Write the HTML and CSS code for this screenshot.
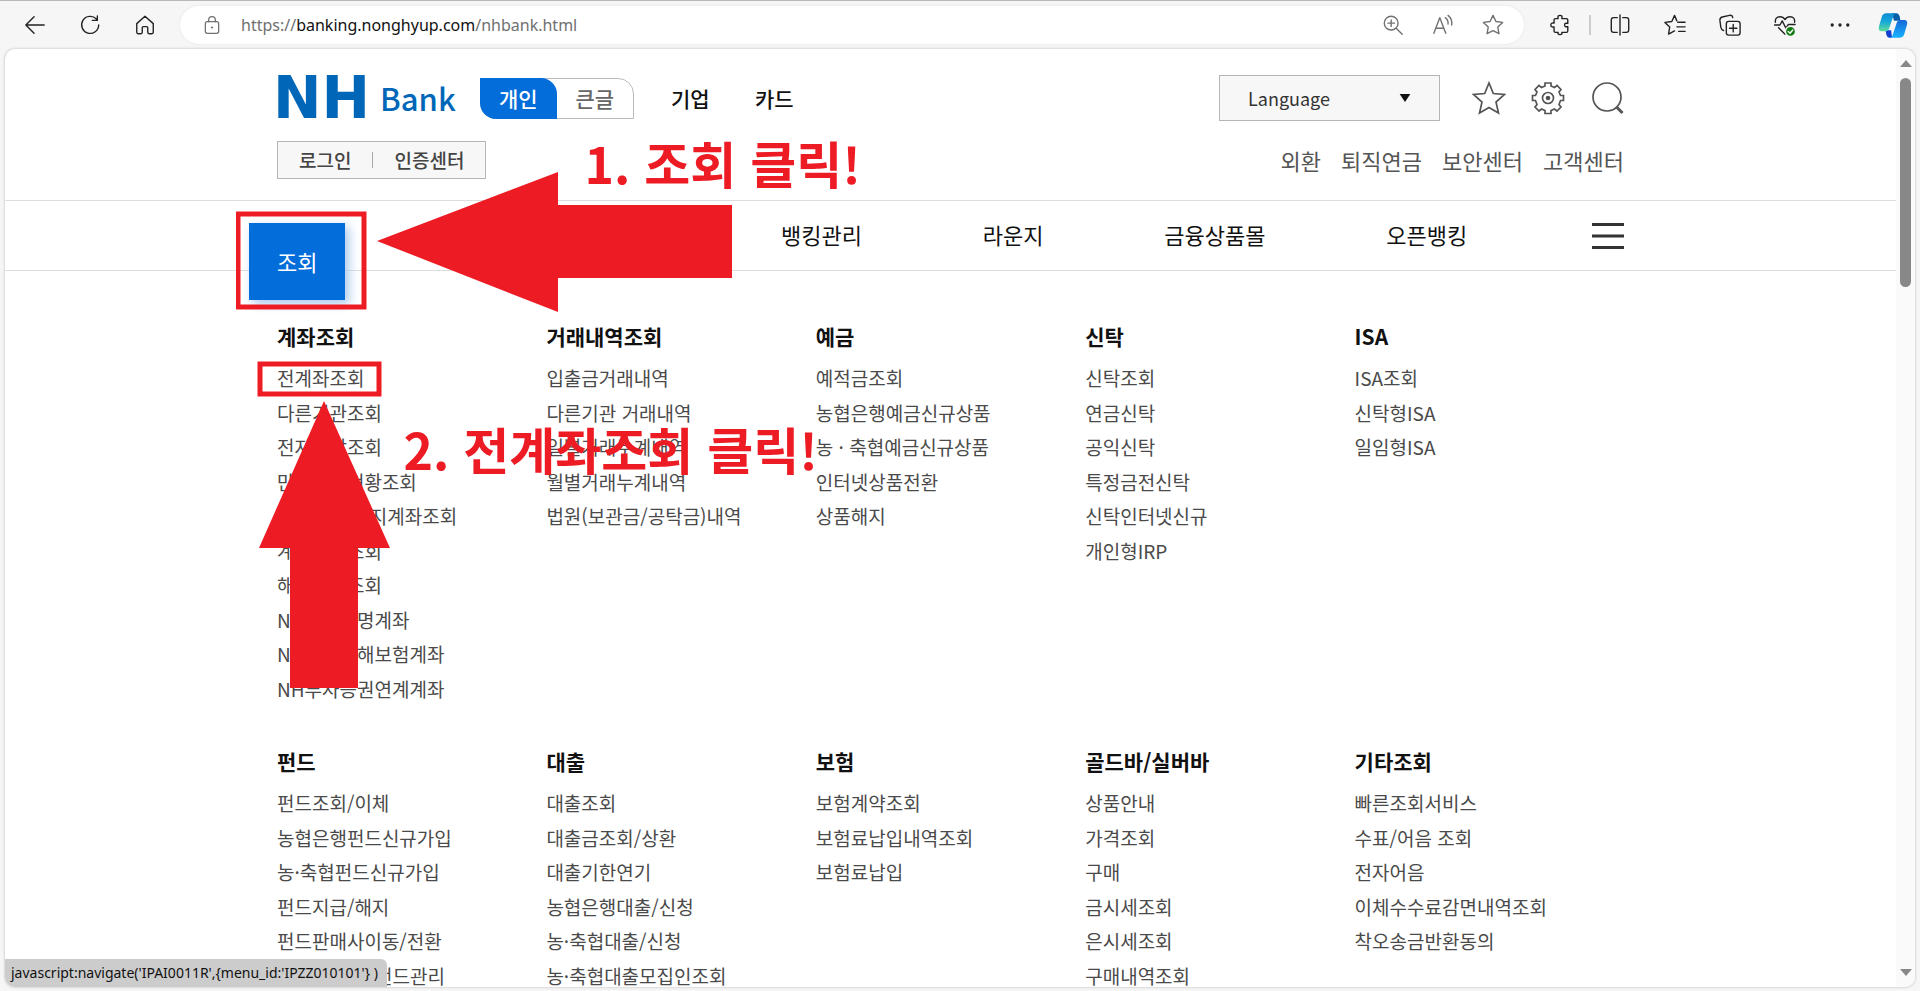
FILE: index.html
```html
<!DOCTYPE html>
<html lang="ko">
<head>
<meta charset="utf-8">
<title>NH Bank</title>
<link rel="stylesheet" href="styles.css">
</head>
<body>
<div class="toolbar">
  <button class="tool" aria-label="뒤로"><svg viewBox="0 0 24 24"><path d="M22 12H2M11 3l-9 9 9 9"/></svg></button>
  <button class="tool" aria-label="새로 고침"><svg viewBox="0 0 24 24"><path d="M19 5.500A9.300 9.300 0 1 0 21.500 12M20 2v5h-5.500"/></svg></button>
  <button class="tool" aria-label="홈"><svg viewBox="0 0 24 24"><path d="M3 10.500 12 2.500l9 8V20q0 1.500-1.500 1.500h-3Q15 21.500 15 20v-5q0-1.200-1.200-1.200h-3.600Q9 13.800 9 15v5q0 1.500-1.500 1.500h-3Q3 21.500 3 20z"/></svg></button>
  <div class="address">
    <svg class="small" viewBox="0 0 24 24"><rect x="4" y="8" width="16" height="14" rx="2.500"/><path d="M8 8V6q0-4 4-4t4 4v2"/><circle cx="12" cy="15" r="1.300" class="fill"/></svg>
    <a class="url" href="#">https://<b>banking.nonghyup.com</b>/nhbank.html</a>
    <button class="tool" aria-label="확대"><svg viewBox="0 0 24 24"><circle cx="10" cy="10" r="7.500"/><path d="m15.500 15.500 6.500 6.500M10 6.500v7M6.500 10h7"/></svg></button>
    <button class="tool" aria-label="소리내어 읽기"><svg viewBox="0 0 24 24"><path d="M2 21 8.500 4 15 21M4.200 15.500h8.600M14.500 4q3.500 2.500 3 7M17.500 1.500q5 4 4 10.500"/></svg></button>
    <button class="tool" aria-label="즐겨찾기 추가"><svg viewBox="0 0 24 24"><path d="m12 1.500 3.200 6.700 7.300 1-5.300 5.100 1.300 7.200L12 18.200l-6.500 3.300 1.300-7.200L1.500 9.200l7.300-1z"/></svg></button>
  </div>
  <button class="tool" aria-label="확장"><svg viewBox="0 0 24 24"><path d="M7 5h3q-1-3.500 2-3.500T14 5h5q1.500 0 1.500 1.500v3.800q-3.500-.8-3.500 1.700t3.500 1.700v4.800q0 1.500-1.500 1.500h-5q1 2.500-2 2.500t-2-2.500H7q-1.500 0-1.500-1.500V14Q2 14.800 2 12t3.500-2V6.500Q5.500 5 7 5z"/></svg></button>
  <span class="rule"></span>
  <button class="tool" aria-label="분할 화면"><svg viewBox="0 0 24 24"><path d="M12 1v22M9 4H5Q2.500 4 2.500 6.500v11Q2.500 20 5 20h4M15 4h4q2.500 0 2.500 2.500v11Q21.500 20 19 20h-4"/></svg></button>
  <button class="tool" aria-label="즐겨찾기"><svg viewBox="0 0 24 24"><path d="M14 7.500 11.500 1.500 8.500 8.200l-7.500 1 5.200 5.100L5 22l6.500-3.500M15 9h8M14 14h9M16 19h7"/></svg></button>
  <button class="tool" aria-label="컬렉션"><svg viewBox="0 0 24 24"><rect x="8" y="8" width="15" height="15" rx="2.500"/><path d="M15.500 11.500v8M11.500 15.500h8M5 18Q2.500 17 2 14.500L1 7Q.8 4 3.500 3.300l8-1.800q3-.5 3.500 2.500"/></svg></button>
  <button class="tool" aria-label="브라우저 필수 요소"><svg viewBox="0 0 24 24"><path d="M1.500 9Q1 3 6.500 3 10 3 12 6q2-3 5.500-3Q23 3 22.500 9M5 15l7 7M.5 12h6L9 7.500l4 8 2.500-4H23"/><circle cx="18" cy="19" r="5.500" class="green"/><path class="white" d="m15.500 19 2 2 3-3.500"/></svg></button>
  <button class="tool" aria-label="더 보기"><svg viewBox="0 0 24 24"><g class="fill"><circle cx="3.500" cy="12" r="1.800"/><circle cx="12" cy="12" r="1.800"/><circle cx="20.500" cy="12" r="1.800"/></g></svg></button>
  <button class="tool copilot" aria-label="Copilot"><svg viewBox="0 0 32 28">
    <defs><linearGradient id="ca" x1="0" y1="0" x2="0" y2="1"><stop offset="0" stop-color="#0d8bd0"/><stop offset=".45" stop-color="#16a6dc"/><stop offset="1" stop-color="#5ddc9a"/></linearGradient><linearGradient id="cb" x1="0" y1="0" x2="0" y2="1"><stop offset="0" stop-color="#1566d6"/><stop offset="1" stop-color="#18b4ff"/></linearGradient></defs>
    <path fill="#0a5fa8" d="M15 1h5q2 0 3 3l1 5h-7z"/>
    <path fill="#0f3fd0" d="M8 19h6l1 8h-3q-2 0-3-3z"/>
    <path fill="url(#ca)" d="M9 1h11q-3 0-4 4l-4 12q-1 3-4 3H4q-4 0-3-5L4 5q1-4 5-4z"/>
    <path fill="url(#cb)" d="M23 27H12q3 0 4-4l4-12q1-3 4-3h4q4 0 3 5l-3 10q-1 4-5 4z"/></svg></button>
</div>

<div class="window">
  <div class="site">
    <header class="header">
      <div class="wrap head">
        <div class="row">
          <a class="logo" href="#"><span class="nh">NH</span><span class="bank">Bank</span></a>
          <div class="switch"><button class="on">개인</button><button>큰글</button></div>
          <a class="kind" href="#">기업</a>
          <a class="kind" href="#">카드</a>
          <button class="language">Language<svg viewBox="0 0 12 9"><path d="M0 0h12L6 9z"/></svg></button>
          <div class="icons">
            <button aria-label="즐겨찾기"><svg viewBox="0 0 34 34"><path d="m17 2 4.300 10.500L32.500 13.500 24 21l2.500 11L17 26.500 7.500 32 10 21 1.500 13.500l11.200-1z"/></svg></button>
            <button aria-label="설정"><svg viewBox="0 0 34 34"><path d="M14 5V2h6v3l3.500 1.500 2.500-2 4 4-2 2.500L29.500 14.500h3v5h-3L28 23.500l2 2.500-4 4-2.500-2L20 29.500v3h-6v-3L10.500 28 8 30l-4-4 2-2.500L4.500 19.500h-3v-5h3L6 11 4 8.500l4-4 2.500 2z"/><circle cx="17" cy="17" r="5.500"/><circle cx="17" cy="17" r="1.500" class="dot"/></svg></button>
            <button aria-label="검색"><svg viewBox="0 0 34 34"><circle cx="17" cy="16" r="14"/><path class="handle" d="m26.500 26 6 6"/></svg></button>
          </div>
        </div>
        <div class="row second">
          <div class="login"><a href="#">로그인</a><a href="#">인증센터</a></div>
          <div class="links"><a href="#">외환</a><a href="#">퇴직연금</a><a href="#">보안센터</a><a href="#">고객센터</a></div>
        </div>
      </div>
    </header>
    <nav class="nav">
      <div class="wrap bar">
        <a class="current" href="#">조회</a><a href="#">이체</a><a href="#">공과금</a><a href="#">뱅킹관리</a><a href="#">라운지</a><a href="#">금융상품몰</a><a href="#">오픈뱅킹</a>
        <button class="burger" aria-label="전체메뉴"><svg viewBox="0 0 32 26"><path d="M0 1.500h32M0 13h32M0 24.500h32"/></svg></button>
      </div>
    </nav>
    <main class="wrap menu">
      <section><h2>계좌조회</h2><ul><li><a href="#">전계좌조회</a></li><li><a href="#">다른기관조회</a></li><li><a href="#">전자통장조회</a></li><li><a href="#">만기계좌현황조회</a></li><li><a href="#">휴면예금 해지계좌조회</a></li><li><a href="#">계좌통합조회</a></li><li><a href="#">해지계좌조회</a></li><li><a href="#">NH농협생명계좌</a></li><li><a href="#">NH농협손해보험계좌</a></li><li><a href="#">NH투자증권연계계좌</a></li></ul></section>
      <section><h2>거래내역조회</h2><ul><li><a href="#">입출금거래내역</a></li><li><a href="#">다른기관 거래내역</a></li><li><a href="#">일별거래누계내역</a></li><li><a href="#">월별거래누계내역</a></li><li><a href="#">법원(보관금/공탁금)내역</a></li></ul></section>
      <section><h2>예금</h2><ul><li><a href="#">예적금조회</a></li><li><a href="#">농협은행예금신규상품</a></li><li><a href="#">농 · 축협예금신규상품</a></li><li><a href="#">인터넷상품전환</a></li><li><a href="#">상품해지</a></li></ul></section>
      <section><h2>신탁</h2><ul><li><a href="#">신탁조회</a></li><li><a href="#">연금신탁</a></li><li><a href="#">공익신탁</a></li><li><a href="#">특정금전신탁</a></li><li><a href="#">신탁인터넷신규</a></li><li><a href="#">개인형IRP</a></li></ul></section>
      <section><h2>ISA</h2><ul><li><a href="#">ISA조회</a></li><li><a href="#">신탁형ISA</a></li><li><a href="#">일임형ISA</a></li></ul></section>
      <section><h2>펀드</h2><ul><li><a href="#">펀드조회/이체</a></li><li><a href="#">농협은행펀드신규가입</a></li><li><a href="#">농·축협펀드신규가입</a></li><li><a href="#">펀드지급/해지</a></li><li><a href="#">펀드판매사이동/전환</a></li><li><a href="#">농·축협 보유펀드관리</a></li></ul></section>
      <section><h2>대출</h2><ul><li><a href="#">대출조회</a></li><li><a href="#">대출금조회/상환</a></li><li><a href="#">대출기한연기</a></li><li><a href="#">농협은행대출/신청</a></li><li><a href="#">농·축협대출/신청</a></li><li><a href="#">농·축협대출모집인조회</a></li></ul></section>
      <section><h2>보험</h2><ul><li><a href="#">보험계약조회</a></li><li><a href="#">보험료납입내역조회</a></li><li><a href="#">보험료납입</a></li></ul></section>
      <section><h2>골드바/실버바</h2><ul><li><a href="#">상품안내</a></li><li><a href="#">가격조회</a></li><li><a href="#">구매</a></li><li><a href="#">금시세조회</a></li><li><a href="#">은시세조회</a></li><li><a href="#">구매내역조회</a></li></ul></section>
      <section><h2>기타조회</h2><ul><li><a href="#">빠른조회서비스</a></li><li><a href="#">수표/어음 조회</a></li><li><a href="#">전자어음</a></li><li><a href="#">이체수수료감면내역조회</a></li><li><a href="#">착오송금반환동의</a></li></ul></section>
    </main>
    <div class="guide">
      <svg class="marks" viewBox="0 0 640 700">
        <path d="m141 192 181-69v33h174v73H322v34z"/>
        <path d="m88 352 66 147h-32v140H54V499H23z"/>
        <rect class="frame" x="2" y="165" width="126" height="93"/>
        <rect class="frame" x="24" y="315" width="119" height="30"/>
      </svg>
      <span class="step one">1. 조회 클릭!</span>
      <span class="step two">2. 전계좌조회 클릭!</span>
    </div>
  </div>
  <div class="scroll"><svg viewBox="0 0 12 7"><path d="M0 7h12L6 0z"/></svg><span class="thumb"></span><svg viewBox="0 0 12 7"><path d="M0 0h12L6 7z"/></svg></div>
  <div class="status">javascript:navigate('IPAI0011R',{menu_id:'IPZZ010101'} )</div>
</div>
</body>
</html>
```
FILE: styles.css
```css
* { box-sizing: border-box; margin: 0; padding: 0; }
body { height: 100vh; display: flex; flex-direction: column; background: #f6f6f6; font-family: "Noto Sans CJK KR", "Noto Sans", sans-serif; color: #111; overflow: hidden; }
a { color: inherit; text-decoration: none; white-space: nowrap; }
button { border: 0; background: none; font: inherit; color: inherit; cursor: pointer; }
ul { list-style: none; }
svg { display: block; fill: none; }

/* Browser toolbar */
.toolbar { flex: none; display: flex; align-items: center; height: 49px; padding: 0 1px 0 7px; border-top: 1px solid #b8b8b8; color: #222; }
.tool { flex: none; width: 55px; display: flex; justify-content: center; }
.tool svg, .small { width: 22px; height: 22px; stroke: currentColor; stroke-width: 1.500; stroke-linejoin: round; stroke-linecap: round; }
.toolbar .fill { fill: currentColor; stroke: none; }
.toolbar .green { fill: #107c10; stroke: #f6f6f6; }
.toolbar .white { stroke: #fff; }
.address { flex: 1; display: flex; align-items: center; height: 38px; margin: 0 8px; padding: 0 6px 0 22px; border-radius: 19px; background: #fff; box-shadow: 0 0 3px #e4e4e4; color: #707070; }
.address .tool { width: 50px; }
.small { width: 20px; margin-right: 19px; }
.url { flex: 1; font: 16px/24px "Noto Sans", sans-serif; }
.url b { font-weight: 400; color: #111; }
.rule { width: 2px; height: 20px; background: #ccc; margin: 0 1px 0 2px; }
.copilot { width: 52px; }
.copilot svg { width: 30px; height: 27px; stroke: none; }

/* Page viewport */
.window { flex: 1; min-height: 0; display: flex; position: relative; margin: 0 5px 4px; border-radius: 10px; background: #fff; overflow: hidden; box-shadow: 0 0 2px 1px #d8d8d8; }
.site { flex: 1; position: relative; overflow: hidden; }
.wrap { width: 1347px; max-width: 100%; margin: 0 auto; }
.header { border-bottom: 1px solid #ddd; }
.head { height: 151px; padding-top: 26px; }
.row { display: flex; align-items: center; height: 46px; }
.logo { display: flex; align-items: center; width: 203px; height: 38px; color: #0067b8; }
.nh { margin-left: -4px; font: bold 58px/42px "DejaVu Sans", sans-serif; }
.bank { margin-left: 10px; font-size: 31px; line-height: 38px; font-weight: 500; }
.switch { display: flex; width: 154px; height: 41px; margin-right: 17px; border: 1px solid #bbb; border-radius: 0 16px 0 16px; font-size: 21px; font-weight: 500; color: #666; }
.switch button { flex: 1; line-height: 36px; }
.switch .on { height: 41px; margin: -1px 0 0 -1px; border-radius: 0 16px 0 16px; background: #036eda; color: #fff; }
.kind { width: 84px; padding-left: 20px; font-size: 21px; line-height: 44px; font-weight: 500; }
.language { display: flex; align-items: center; justify-content: space-between; width: 221px; height: 46px; margin-left: auto; padding: 0 28px; border: 1px solid #b5b5b5; background: #f7f7f7; color: #333; font-size: 18px; }
.language svg { width: 12px; height: 8px; fill: #111; }
.icons { display: flex; gap: 25px; margin-left: 32px; }
.icons svg { width: 34px; height: 34px; stroke: #555; stroke-width: 1.700; }
.icons .dot { fill: #333; }
.icons .handle { stroke-width: 3; }
.second { justify-content: space-between; height: 38px; margin-top: 20px; }
.login { display: flex; align-items: center; height: 38px; border: 1px solid #b5b5b5; background: #f7f7f7; font-size: 19px; font-weight: 500; color: #444; }
.login a { padding: 0 21px; line-height: 16px; }
.login a + a { border-left: 1px solid #aaa; }
.links { display: flex; gap: 20px; font-size: 22px; color: #555; }
.nav { height: 70px; border-bottom: 1px solid #ddd; }
.bar { display: flex; justify-content: space-between; height: 69px; font-size: 22px; line-height: 67px; }
.bar .current { height: 77px; margin: 22px -28px 0; padding: 0 28px; line-height: 77px; background: #036eda; color: #fff; box-shadow: 4px 4px 10px #a9c9ec; position: relative; }
.burger { align-self: center; padding-left: 4px; }
.burger svg { width: 32px; height: 26px; stroke: #333; stroke-width: 3; }
.menu { display: grid; grid-template-columns: repeat(5, 1fr); row-gap: 39px; padding-top: 49px; }
.menu h2 { height: 41px; font-size: 21px; line-height: 32px; font-weight: 700; }
.menu ul { display: grid; grid-template-rows: repeat(10, 1fr); height: 345px; font-size: 19px; line-height: 34px; color: #4a4a4a; }

/* Step marks drawn over the page */
.guide { position: absolute; top: 0; left: 50%; width: 1430px; margin-left: -715px; pointer-events: none; color: #ed1c24; }
.marks { width: 640px; height: 700px; fill: #ed1c24; }
.frame { fill: none; stroke: #ed1c24; stroke-width: 5; }
.step { position: absolute; font-size: 50px; font-weight: 700; line-height: 60px; white-space: nowrap; }
.one { left: 349px; top: 83px; }
.two { left: 168px; top: 369px; }

.scroll { flex: none; display: flex; flex-direction: column; align-items: center; width: 19px; padding: 11px 0; background: #fafafa; }
.scroll svg { width: 12px; height: 7px; fill: #888; }
.thumb { width: 11px; height: 209px; margin: 11px 0 auto; border-radius: 6px; background: #888; }
.status { position: absolute; left: 0; bottom: 0; padding: 0 9px 0 6px; border-top-right-radius: 6px; background: #ccc; font: 14px/28px "Noto Sans", sans-serif; color: #111; }
```
